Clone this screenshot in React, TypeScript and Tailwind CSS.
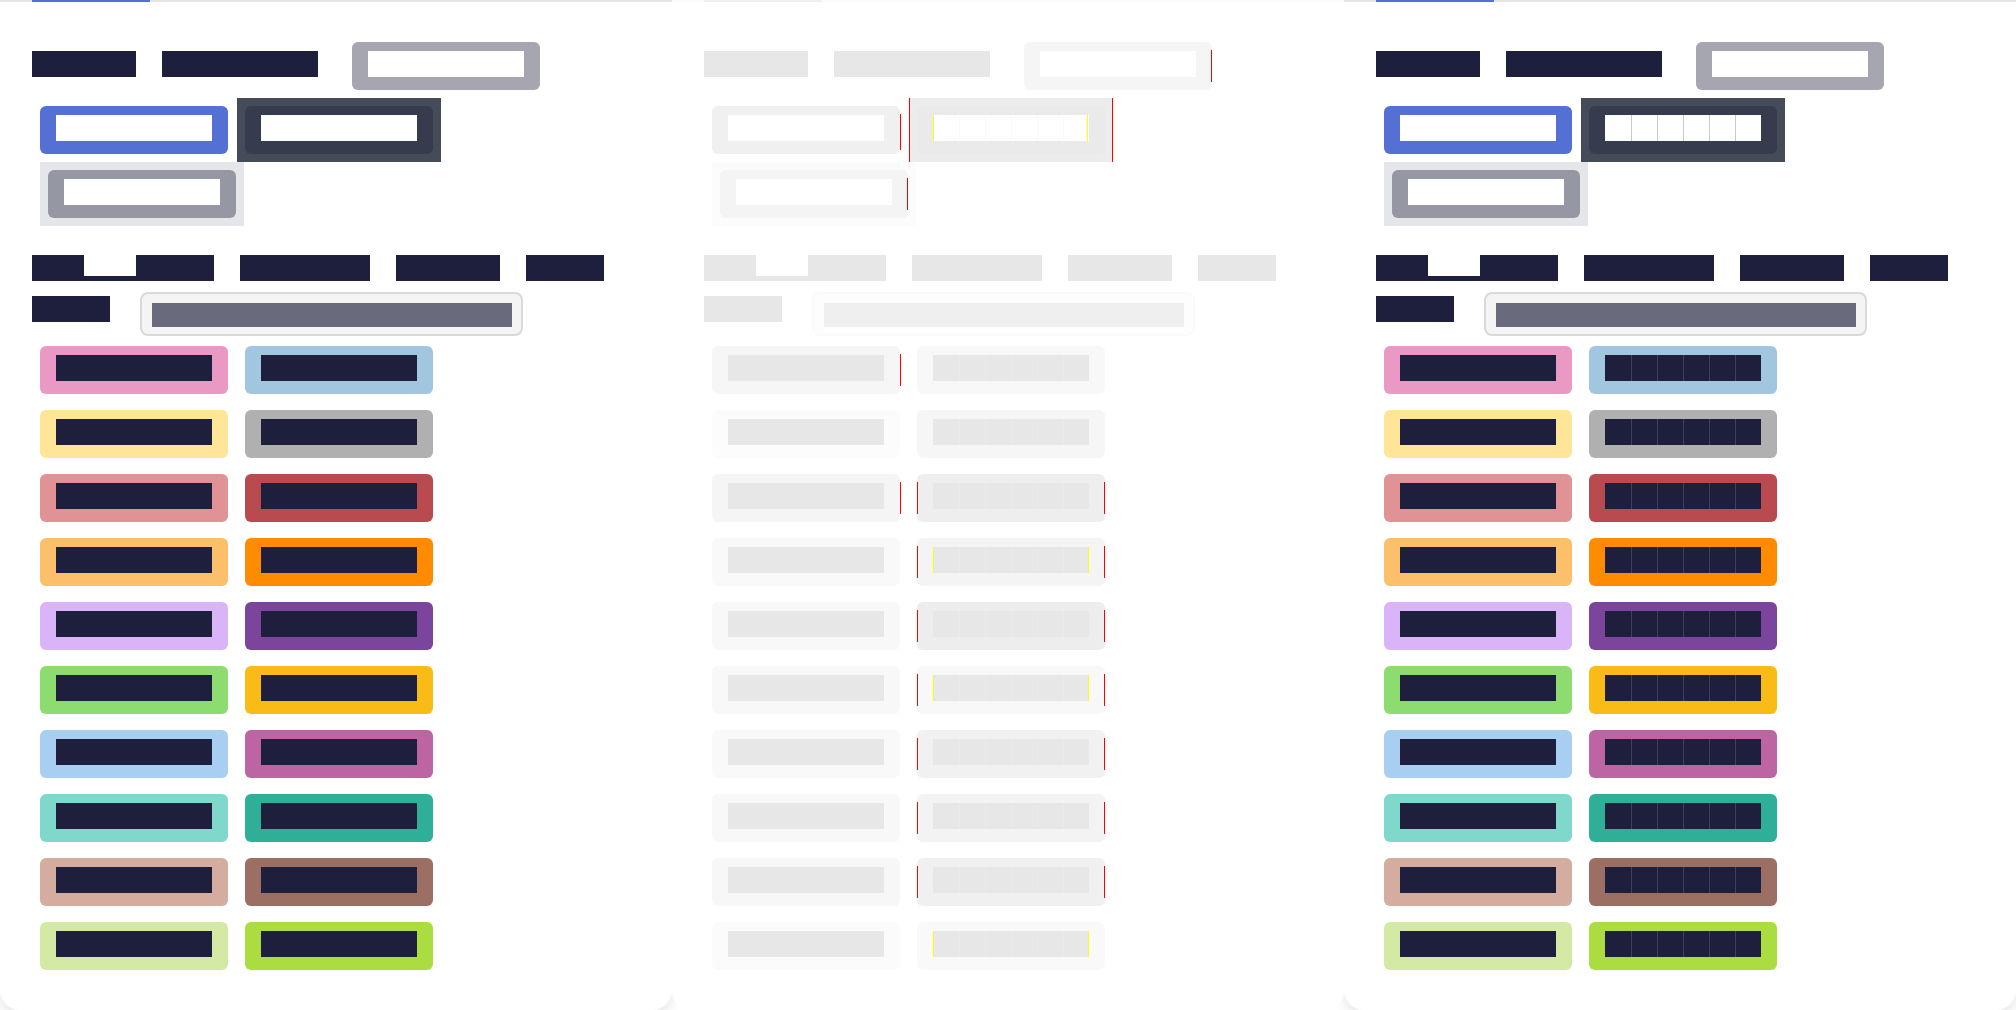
import React from "react";

const INK = "bg-[#1d1f3d] text-[#1d1f3d]";
const PAPER = "bg-white text-white";

const swatches = [
  { a: "bg-[#ea98c4]", b: "bg-[#a2c6e0]", na: "Pink", nb: "Sky" },
  { a: "bg-[#fee597]", b: "bg-[#b0b0b0]", na: "Yellow", nb: "Gray" },
  { a: "bg-[#e09294]", b: "bg-[#b94a50]", na: "Rose", nb: "Red" },
  { a: "bg-[#fcc06a]", b: "bg-[#ff8c00]", na: "Peach", nb: "Orange" },
  { a: "bg-[#dab4f8]", b: "bg-[#7b459e]", na: "Lavender", nb: "Purple" },
  { a: "bg-[#8ddc70]", b: "bg-[#fbbb16]", na: "Green", nb: "Amber" },
  { a: "bg-[#a8cef2]", b: "bg-[#bd64a2]", na: "Blue", nb: "Magenta" },
  { a: "bg-[#80d8cc]", b: "bg-[#30af98]", na: "Mint", nb: "Teal" },
  { a: "bg-[#d4aca0]", b: "bg-[#9c6f64]", na: "Sand", nb: "Brown" },
  { a: "bg-[#d4eaa4]", b: "bg-[#acdd40]", na: "Pistachio", nb: "Lime" },
];

const days = ["Mo", "Tu", "We", "Th", "Fr", "Sa"];

function Bar({ cls, children }: { cls: string; children: React.ReactNode }) {
  return (
    <span
      className={`block h-[26px] shrink-0 overflow-hidden whitespace-nowrap text-[13px] leading-[26px] ${cls}`}
    >
      {children}
    </span>
  );
}

function Cells({ cls, line }: { cls: string; line: string }) {
  return (
    <span className="flex h-[26px] w-[156px] shrink-0">
      {days.map((d, i) => (
        <span
          key={d}
          className={`h-[26px] w-[26px] overflow-hidden text-[13px] leading-[26px] ${cls} ${i > 0 ? line : ""}`}
        >
          {d}
        </span>
      ))}
    </span>
  );
}

function Btn({ bg, children }: { bg: string; children: React.ReactNode }) {
  return <div className={`h-[48px] w-[188px] shrink-0 rounded-md px-4 pt-[9px] ${bg}`}>{children}</div>;
}

function PanelBody({ seg }: { seg: boolean }) {
  return (
    <div className="font-['Liberation_Sans',sans-serif]">
      {/* tab underline */}
      <div className="h-[2px] w-full bg-[#e4e4e4]">
        <div className="ml-[32px] h-[2px] w-[118px] bg-[#5470d4]" />
      </div>

      <div className="pl-[32px] pt-[40px]">
        <div className="flex items-start">
          <div className="mt-[9px]">
            <Bar cls={`w-[104px] ${INK}`}>Buttons</Bar>
          </div>
          <div className="ml-[26px] mt-[9px]">
            <Bar cls={`w-[156px] ${INK}`}>Typography</Bar>
          </div>
          <div className="ml-[34px]">
            <Btn bg="bg-[#a6a6b1]">
              <Bar cls={`w-[156px] ${PAPER}`}>Outline</Bar>
            </Btn>
          </div>
        </div>

        <div className="mt-[8px] flex">
          <div className="w-[205px] py-2 pl-2">
            <Btn bg="bg-[#5470d4]">
              <Bar cls={`w-[156px] ${PAPER}`}>Primary</Bar>
            </Btn>
          </div>
          <div className="w-[204px] bg-[#454c59] p-2">
            <Btn bg="bg-[#363b4e]">
              {seg ? (
                <Cells cls={PAPER} line="border-l border-[#c9c9d1]" />
              ) : (
                <Bar cls={`w-[156px] ${PAPER}`}>Secondary</Bar>
              )}
            </Btn>
          </div>
        </div>

        <div className="ml-2 w-[204px] bg-[#e5e6ea] p-2">
          <Btn bg="bg-[#9597a3]">
            <Bar cls={`w-[156px] ${PAPER}`}>Disabled</Bar>
          </Btn>
        </div>

        <div className="mt-[29px] flex gap-[26px]">
          <div className="flex">
            <Bar cls={`w-[52px] ${INK}`}>Acc</Bar>
            <span className="h-[26px] w-[52px] border-b-[5px] border-[#1d1f3d] bg-white" />
            <Bar cls={`w-[78px] ${INK}`}>colors</Bar>
          </div>
          <Bar cls={`w-[130px] ${INK}`}>Customize</Bar>
          <Bar cls={`w-[104px] ${INK}`}>Palettes</Bar>
          <Bar cls={`w-[78px] ${INK}`}>Theme</Bar>
        </div>

        <div className="mt-[11px] flex items-start">
          <div className="mt-[4px]">
            <Bar cls={`w-[78px] ${INK}`}>Search</Bar>
          </div>
          <div className="ml-[30px] h-[44px] w-[383px] rounded-lg border-2 border-[#d9d9d9] bg-[#f4f4f4] pl-[10px] pt-[9px]">
            <span className="block h-[24px] w-[360px] overflow-hidden whitespace-nowrap bg-[#696a7c] text-[13px] leading-[24px] text-[#696a7c]">
              Filter colors
            </span>
          </div>
        </div>

        <div className="mt-[2px] flex flex-col">
          {swatches.map((s) => (
            <div key={s.na} className="flex">
              <div className="w-[205px] py-2 pl-2">
                <Btn bg={s.a}>
                  <Bar cls={`w-[156px] ${INK}`}>{s.na}</Bar>
                </Btn>
              </div>
              <div className="w-[204px] p-2">
                <Btn bg={s.b}>
                  {seg ? (
                    <Cells cls={INK} line="border-l border-white/15" />
                  ) : (
                    <Bar cls={`w-[156px] ${INK}`}>{s.nb}</Bar>
                  )}
                </Btn>
              </div>
            </div>
          ))}
        </div>
      </div>
    </div>
  );
}

type Mark = { x: number; y: number; h: number; yellow?: boolean };

const marks: Mark[] = [
  { x: 539, y: 50, h: 32 },
  { x: 228, y: 114, h: 36 },
  { x: 237, y: 98, h: 64 },
  { x: 440, y: 98, h: 64 },
  { x: 261, y: 115, h: 26, yellow: true },
  { x: 415, y: 115, h: 26, yellow: true },
  { x: 235, y: 178, h: 32 },
];

const rowMarks: { r: number; c1?: boolean; c2?: boolean; inner?: boolean }[] = [
  { r: 0, c1: true },
  { r: 2, c1: true, c2: true },
  { r: 3, c2: true, inner: true },
  { r: 4, c2: true },
  { r: 5, c2: true, inner: true },
  { r: 6, c2: true },
  { r: 7, c2: true },
  { r: 8, c2: true },
  { r: 9, inner: true },
];

rowMarks.forEach(({ r, c1, c2, inner }) => {
  const top = 346 + r * 64;
  if (c1) marks.push({ x: 228, y: top + 8, h: 32 });
  if (c2) {
    marks.push({ x: 245, y: top + 8, h: 32 });
    marks.push({ x: 432, y: top + 8, h: 32 });
  }
  if (inner) {
    marks.push({ x: 261, y: top + 9, h: 26, yellow: true });
    marks.push({ x: 416, y: top + 9, h: 26, yellow: true });
  }
});

export default function App() {
  return (
    <div className="flex h-[1010px] w-[2016px] overflow-hidden bg-white">
      <div className="h-[1010px] w-[672px] shrink-0 overflow-hidden rounded-b-[20px] bg-white shadow-[0_6px_14px_rgba(0,0,0,0.1)]">
        <PanelBody seg={false} />
      </div>

      <div className="relative z-10 h-[1010px] w-[672px] shrink-0 overflow-hidden rounded-b-[20px] bg-white">
        <div className="opacity-10 grayscale">
          <PanelBody seg />
        </div>
        {marks.map((m, i) => (
          <span
            key={i}
            className={`absolute w-px ${m.yellow ? "bg-[#ffff00]" : "bg-[#ff0000]"}`}
            style={{ left: m.x, top: m.y, height: m.h }}
          />
        ))}
      </div>

      <div className="h-[1010px] w-[672px] shrink-0 overflow-hidden rounded-b-[20px] bg-white shadow-[0_6px_14px_rgba(0,0,0,0.1)]">
        <PanelBody seg />
      </div>
    </div>
  );
}
